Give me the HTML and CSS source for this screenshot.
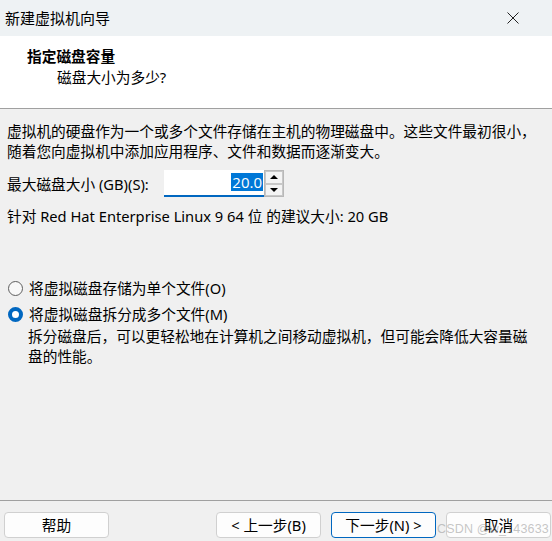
FILE: index.html
```html
<!DOCTYPE html>
<html lang="zh-CN">
<head>
<meta charset="utf-8">
<link rel="stylesheet" href="styles.css">
</head>
<body>
<div class="window">
  <div class="titlebar">
    <span class="title">新建虚拟机向导</span>
    <svg class="close" width="12" height="12" viewBox="0 0 12 12"><path d="M0.5 0.5 L11.5 11.5 M11.5 0.5 L0.5 11.5" stroke="#222" stroke-width="1"/></svg>
  </div>
  <div class="header">
    <div class="h-title">指定磁盘容量</div>
    <div class="h-sub">磁盘大小为多少?</div>
  </div>
  <div class="content">
    <p class="desc">虚拟机的硬盘作为一个或多个文件存储在主机的物理磁盘中。这些文件最初很小，<br>随着您向虚拟机中添加应用程序、文件和数据而逐渐变大。</p>
    <div class="size-row">
      <span class="label">最大磁盘大小 (GB)(S):</span>
      <div class="input"><span class="sel">20.0</span></div>
      <div class="spin">
        <div class="spin-btn"><span class="tri-up"></span></div>
        <div class="spin-btn"><span class="tri-down"></span></div>
      </div>
    </div>
    <div class="rec">针对 Red Hat Enterprise Linux 9 64 位 的建议大小: 20 GB</div>
    <div class="radios">
      <div class="radio-row"><span class="radio"></span>将虚拟磁盘存储为单个文件(O)</div>
      <div class="radio-row"><span class="radio on"></span>将虚拟磁盘拆分成多个文件(M)</div>
      <p class="note">拆分磁盘后，可以更轻松地在计算机之间移动虚拟机，但可能会降低大容量磁<br>盘的性能。</p>
    </div>
  </div>
  <div class="footer">
    <button class="btn">帮助</button>
    <div class="spacer"></div>
    <button class="btn">&lt; 上一步(B)</button>
    <button class="btn primary">下一步(N) &gt;</button>
    <button class="btn">取消</button>
    <span class="watermark">CSDN @w_143633</span>
  </div>
</div>
</body>
</html>
```
FILE: styles.css
```css
* { box-sizing: border-box; }
html, body { margin: 0; padding: 0; }
body {
  width: 552px;
  height: 541px;
  background: #f0f0f0;
  font-family: "Noto Sans", "Noto Sans CJK SC", sans-serif;
  font-size: 14.7px;
  color: #000;
  overflow: hidden;
}
.window {
  position: relative;
  height: 541px;
  display: flex;
  flex-direction: column;
}
.titlebar {
  height: 36px;
  background: #eef2f4;
  display: flex;
  align-items: center;
  justify-content: space-between;
  padding: 0 33px 0 5px;
  font-size: 15px;
}
.title { line-height: 20px; }
.close { display: block; }
.header {
  height: 73px;
  background: #fff;
  border-bottom: 1px solid #a0a0a0;
  padding: 10px 0 0 27px;
}
.h-title {
  font-weight: bold;
  line-height: 20px;
}
.h-sub {
  line-height: 20px;
  margin-top: 1px;
  padding-left: 30px;
}
.content {
  flex: 1;
  padding: 13px 0 0 7px;
}
.desc {
  margin: 0;
  line-height: 19.5px;
}
.size-row {
  display: flex;
  align-items: center;
  margin-top: 9px;
  height: 27px;
}
.label { width: 157px; line-height: 20px; }
.input {
  width: 100px;
  height: 27px;
  background: #fff;
  border-bottom: 2px solid #0067c0;
  display: flex;
  justify-content: flex-end;
  align-items: center;
  padding-right: 1px;
}
.sel {
  background: #0078d7;
  color: #fff;
  font-family: "Open Sans", "Noto Sans", sans-serif;
  font-size: 15px;
  line-height: 18px;
  padding: 0 1px;
  margin-top: -2px;
}
.spin {
  width: 20px;
  height: 27px;
  border: 1px solid #b8b8b8;
  display: flex;
  flex-direction: column;
  background: #f0f0f0;
}
.spin-btn {
  flex: 1;
  border: 1px solid #c8c8c8;
  background: #f4f4f4;
  display: flex;
  align-items: center;
  justify-content: center;
}
.tri-up {
  width: 0; height: 0;
  border-left: 4px solid transparent;
  border-right: 4px solid transparent;
  border-bottom: 4px solid #000;
}
.tri-down {
  width: 0; height: 0;
  border-left: 4px solid transparent;
  border-right: 4px solid transparent;
  border-top: 4px solid #000;
}
.rec {
  margin-top: 9px;
  line-height: 20px;
}
.radios {
  margin-top: 49px;
}
.radio-row {
  display: flex;
  align-items: center;
  height: 26px;
  line-height: 20px;
}
.radio {
  width: 15px;
  height: 15px;
  border: 1px solid #5e5e5e;
  border-radius: 50%;
  background: #f8f8f8;
  margin: 0 6px 0 1px;
  flex: none;
}
.radio.on {
  border: 4px solid #0067c0;
  background: #fff;
}
.note {
  margin: 0;
  padding-left: 21px;
  line-height: 19.5px;
}
.footer {
  height: 41px;
  border-top: 1px solid #a0a0a0;
  display: flex;
  align-items: flex-start;
  padding: 11px 1px 0 4px;
  gap: 10px;
}
.spacer { flex: 1; }
.btn {
  width: 105px;
  height: 26px;
  background: #fdfdfd;
  border: 1px solid #d0d0d0;
  border-radius: 4px;
  font-family: "Noto Sans", "Noto Sans CJK SC", sans-serif;
  font-size: 14.7px;
  color: #000;
  padding: 0;
  line-height: 22px;
}
.btn.primary { border-color: #0067c0; }
.watermark {
  position: absolute;
  right: 3px;
  bottom: 5px;
  font-family: "Liberation Sans", sans-serif;
  font-size: 12.5px;
  color: rgba(150, 150, 150, 0.55);
  letter-spacing: 0.2px;
  pointer-events: none;
}
```
